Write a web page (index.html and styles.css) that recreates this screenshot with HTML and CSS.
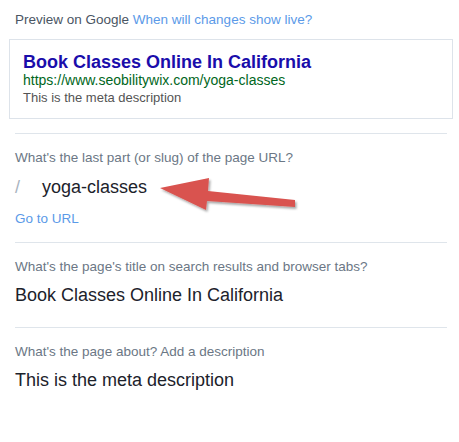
FILE: index.html
```html
<!DOCTYPE html>
<html>
<head>
<meta charset="utf-8">
<link rel="stylesheet" href="styles.css">
</head>
<body>
<div class="panel">
  <div class="preview-head">Preview on Google <a class="link">When will changes show live?</a></div>
  <div class="serp">
    <div class="serp-title">Book Classes Online In California</div>
    <div class="serp-url">https://www.seobilitywix.com/yoga-classes</div>
    <div class="serp-desc">This is the meta description</div>
  </div>
  <div class="section sec-slug">
    <div class="label">What's the last part (or slug) of the page URL?</div>
    <div class="slug-row"><span class="slash">/</span><span class="slug">yoga-classes</span></div>
    <a class="link go">Go to URL</a>
  </div>
  <div class="section sec-title">
    <div class="label">What's the page's title on search results and browser tabs?</div>
    <div class="value">Book Classes Online In California</div>
  </div>
  <div class="section sec-desc">
    <div class="label">What's the page about? Add a description</div>
    <div class="value">This is the meta description</div>
  </div>
  <svg class="arrow" width="160" height="50" viewBox="150 170 160 50">
    <defs>
      <filter id="sh" x="-20%" y="-50%" width="140%" height="200%">
        <feDropShadow dx="1.5" dy="2" stdDeviation="1.2" flood-color="#000" flood-opacity="0.35"/>
      </filter>
    </defs>
    <polygon filter="url(#sh)" fill="#d9534f" points="160,188 209,178 208,191 295,200 295,207 207,201 206,210"/>
  </svg>
</div>
</body>
</html>
```

FILE: styles.css
```css
html, body {
  margin: 0;
  padding: 0;
  background: #ffffff;
}
body {
  font-family: "Liberation Sans", Arial, sans-serif;
}
.panel {
  position: relative;
  width: 459px;
  height: 442px;
  padding: 0 12px 0 15px;
  box-sizing: border-box;
}
.preview-head {
  padding-top: 12px;
  font-size: 13.5px;
  line-height: 16px;
  color: #4a5563;
}
.link {
  color: #5b9ae8;
  text-decoration: none;
}
.serp {
  margin: 11px -6px 0 -6px;
  border: 1px solid #dde3ea;
  padding: 12px 13px 0 13px;
  height: 80px;
  box-sizing: border-box;
}
.serp-title {
  font-size: 18px;
  font-weight: bold;
  line-height: 20px;
  color: #1a0dab;
}
.serp-url {
  font-size: 14px;
  line-height: 17px;
  color: #006621;
}
.serp-desc {
  font-size: 13px;
  line-height: 17px;
  color: #545454;
}
.section {
  border-top: 1px solid #dfe5eb;
  padding-top: 16px;
  box-sizing: border-box;
}
.sec-slug {
  margin-top: 14px;
  height: 109px;
}
.sec-title {
  height: 85px;
}
.label {
  font-size: 13.5px;
  line-height: 16px;
  color: #6b7785;
}
.slug-row {
  display: flex;
  align-items: baseline;
  margin-top: 10px;
  font-size: 18px;
  line-height: 22px;
}
.slash {
  color: #a9b4bf;
  width: 27px;
}
.slug {
  color: #1c222b;
}
.go {
  display: block;
  margin-top: 13px;
  font-size: 13.5px;
  line-height: 16px;
}
.value {
  margin-top: 9px;
  font-size: 18px;
  line-height: 22px;
  color: #1c222b;
}
.arrow {
  position: absolute;
  left: 150px;
  top: 170px;
}
```
